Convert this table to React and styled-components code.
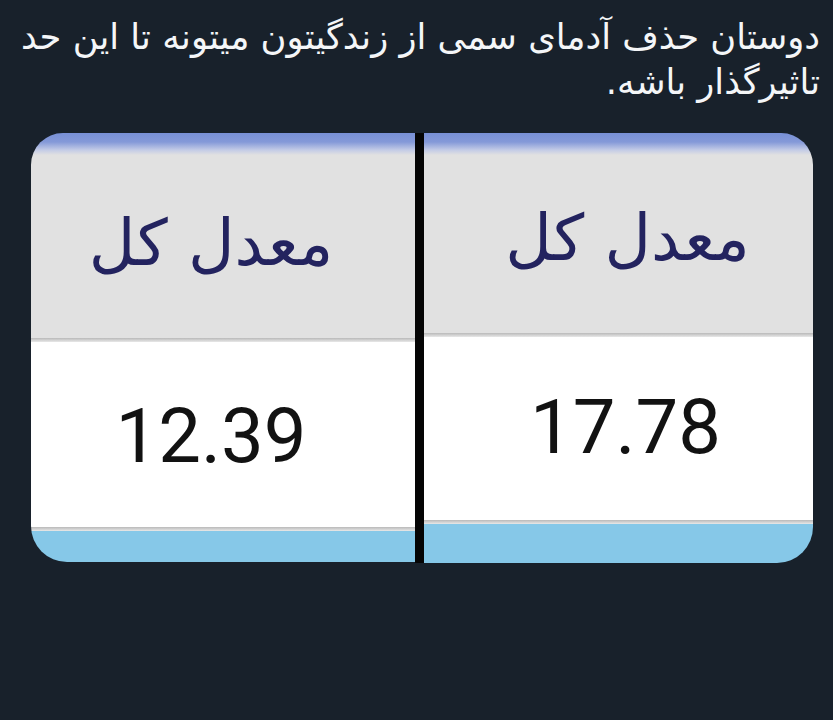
import React from "react";
import styled, { createGlobalStyle } from "styled-components";

const Global = createGlobalStyle`
  html, body { margin: 0; padding: 0; background: #18212b; }
  body { width: 833px; height: 720px; overflow: hidden; }
`;

const Page = styled.div`
  width: 833px;
  height: 720px;
  background: #18212b;
  display: flex;
  flex-direction: column;
  padding-top: 14px;
  box-sizing: border-box;
`;

const Caption = styled.p`
  margin: 0;
  padding: 0 13px 0 16px;
  direction: rtl;
  text-align: right;
  color: #f4f6f8;
  font-family: "DejaVu Sans", "Noto Sans", sans-serif;
  font-size: 35.3px;
  line-height: 45px;
  white-space: nowrap;
`;

const Table = styled.div`
  display: flex;
  margin: 29px 0 0 31px;
  width: 782px;
  height: 430px;
`;

const Panel = styled.div`
  width: ${(p) => p.$w}px;
  display: flex;
  flex-direction: column;
  overflow: hidden;
  border-radius: ${(p) => (p.$side === "left" ? "32px 0 0 36px" : "0 32px 36px 0")};
  height: ${(p) => p.$h}px;
  align-self: flex-start;
`;

const Divider = styled.div`
  width: 9px;
  background: #050505;
  align-self: stretch;
`;

const Header = styled.div`
  height: ${(p) => p.$h}px;
  background: linear-gradient(#7890d6 0px, #8499d8 9px, #c3cbe6 17px, #e1e1e1 22px, #e1e1e1 100%);
  display: flex;
  align-items: center;
  justify-content: center;
  padding-top: ${(p) => p.$pt}px;
  box-sizing: border-box;
`;

const Title = styled.span`
  direction: rtl;
  font-family: "DejaVu Sans", sans-serif;
  font-size: 64px;
  color: #23235f;
  margin-left: ${(p) => p.$shift}px;
`;

const Rule = styled.div`
  height: 4px;
  background: linear-gradient(#b9b9b9, #e8e8e8);
`;

const Body = styled.div`
  height: ${(p) => p.$h}px;
  background: #ffffff;
  display: flex;
  align-items: center;
  justify-content: center;
`;

const Value = styled.span`
  font-family: Roboto, "Liberation Sans", sans-serif;
  font-size: 76px;
  color: #121212;
  margin-left: ${(p) => p.$shift}px;
  margin-top: ${(p) => p.$mt}px;
`;

const Footer = styled.div`
  flex: 1;
  background: #86c8e8;
`;

function Column({ side, w, h, headH, bodyH, pt, titleShift, valueShift, valueMt, value }) {
  return (
    <Panel $side={side} $w={w} $h={h}>
      <Header $h={headH} $pt={pt}>
        <Title $shift={titleShift}>معدل کل</Title>
      </Header>
      <Rule />
      <Body $h={bodyH}>
        <Value $shift={valueShift} $mt={valueMt}>{value}</Value>
      </Body>
      <Rule />
      <Footer />
    </Panel>
  );
}

export default function App() {
  return (
    <>
      <Global />
      <Page>
        <Caption>
          دوستان حذف آدمای سمی از زندگیتون میتونه تا این حد
          <br />
          تاثیرگذار باشه.
        </Caption>
        <Table>
          <Column side="left" w={384} h={429} headH={205} bodyH={185} pt={14} titleShift={-24} valueShift={-24} valueMt={2} value="12.39" />
          <Divider />
          <Column side="right" w={389} h={430} headH={200} bodyH={183} pt={10} titleShift={18} valueShift={14} valueMt={-4} value="17.78" />
        </Table>
      </Page>
    </>
  );
}
